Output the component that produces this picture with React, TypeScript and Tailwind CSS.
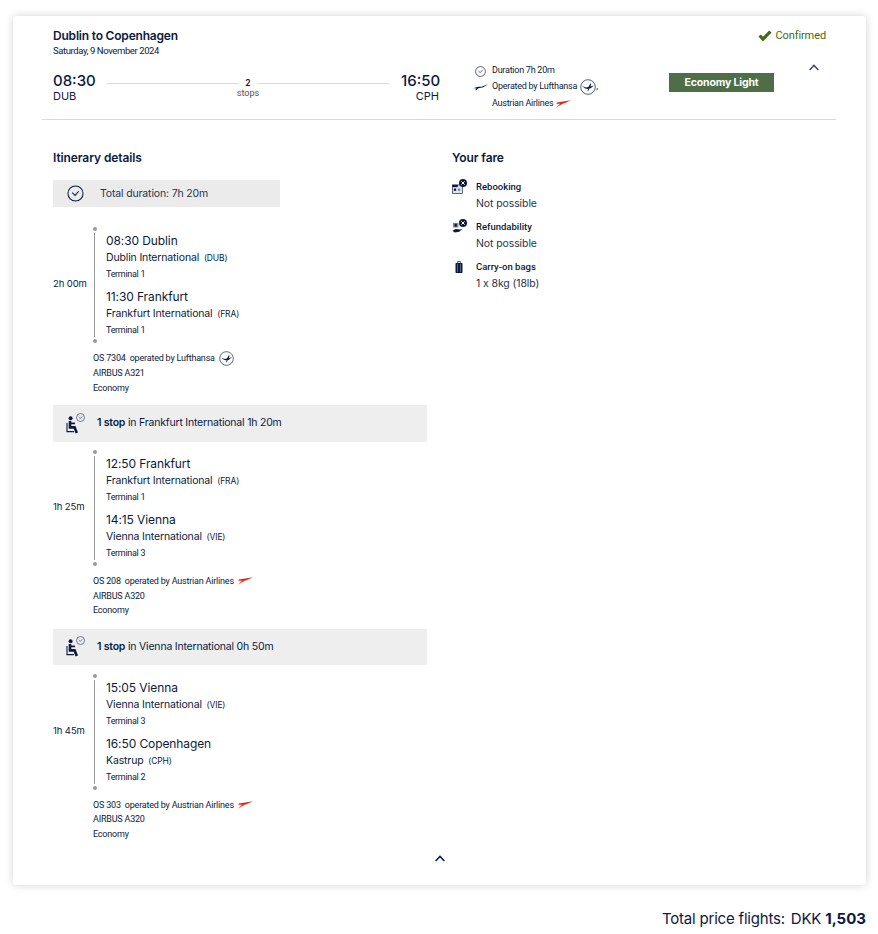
import React from "react";

const NAVY = "text-[#0c1a40]";

function Crane({ className = "" }: { className?: string }) {
  return (
    <svg viewBox="0 0 16 8" className={className}>
      <path d="M0 5.4 L5.5 3.6 L9 3.8 L16 1 L11 4.2 L7 5 L5.6 5.2 L3.6 7.4 L2.4 7.4 L3.6 5.2 Z" fill="#0c1a40" />
    </svg>
  );
}

function LhLogo({ size = "h-[15px] w-[15px]" }: { size?: string }) {
  return (
    <svg viewBox="0 0 16 16" className={`${size} shrink-0`}>
      <circle cx="8" cy="8" r="7.3" fill="white" stroke="#0c1a40" strokeWidth="0.7" />
      <path d="M1.8 6.8 L5.8 8.4 L8.4 8 L10.4 4.6 L11.2 4.6 L10.4 7.6 L14 6.4 L10.6 9.2 L8.2 10 L5.2 9.4 Z" fill="#0c1a40" />
      <path d="M8.2 10 L7.6 12 L8.4 12 L9.2 9.8 Z" fill="#0c1a40" />
    </svg>
  );
}

function OsLogo() {
  return (
    <svg viewBox="0 0 16 8" className="h-[8px] w-[15px] shrink-0">
      <path d="M0.8 2.4 L16 0 L9 3.2 L7 3.6 L0 8 L4.4 3.8 L0.4 3.8 Z" fill="#e3251b" />
    </svg>
  );
}

function Clock({ size }: { size: string }) {
  return (
    <svg viewBox="0 0 18 18" className={`${size} shrink-0`} fill="none" stroke="#0c1a40">
      <circle cx="9" cy="9" r="8" strokeWidth="1.1" />
      <path d="M5.6 8.2 L8.6 11 L12.4 6.6" strokeWidth="1.1" />
    </svg>
  );
}

function Chevron({ stroke = "#0c1a40" }: { stroke?: string }) {
  return (
    <svg viewBox="0 0 12 8" className="h-[7px] w-[12px]" fill="none" stroke={stroke} strokeWidth="1.7">
      <path d="M1 6.8 L6 1.6 L11 6.8" />
    </svg>
  );
}

function SeatIcon() {
  return (
    <div className="relative h-[20px] w-[19px] shrink-0">
      <svg viewBox="0 0 13 18" className="absolute bottom-0 left-0 h-[18px] w-[13px]" fill="none" stroke="#0c1a40">
        <circle cx="4.6" cy="2.2" r="2" fill="#0c1a40" stroke="none" />
        <path d="M4 5 V11.4 H8.6 L10.8 17" strokeWidth="2.6" />
        <path d="M5 7.4 H9" strokeWidth="1.7" />
        <path d="M1 7 V15.6 H8" strokeWidth="1.1" />
      </svg>
      <div className="absolute right-0 top-[-1px]">
        <Clock size="h-[9px] w-[9px]" />
      </div>
    </div>
  );
}

function BadgeX() {
  return (
    <svg viewBox="0 0 8 8" className="absolute -right-[1px] -top-[1px] h-[8px] w-[8px]">
      <circle cx="4" cy="4" r="4" fill="#0c1a40" />
      <path d="M2.4 2.4 L5.6 5.6 M5.6 2.4 L2.4 5.6" stroke="white" strokeWidth="1" />
    </svg>
  );
}

type Stop = { time: string; city: string; airport: string; code: string; terminal: string };
type Seg = { duration: string; from: Stop; to: Stop; flight: string; by: string; logo: React.ReactNode; plane: string };

function StopBlock({ s, gap }: { s: Stop; gap?: boolean }) {
  return (
    <div className={gap ? "mt-[7px]" : ""}>
      <div className="text-[12px] leading-[16px] tracking-[-0.1px]">{s.time} {s.city}</div>
      <div className="mt-[1px] text-[10.5px] leading-[16px] tracking-[-0.15px]">
        {s.airport} <span className="ml-[2px] text-[8.5px]">({s.code})</span>
      </div>
      <div className="mt-[1px] font-['Roboto',sans-serif] text-[9px] leading-[15px] tracking-[-0.3px]">{s.terminal}</div>
    </div>
  );
}

function Segment({ seg }: { seg: Seg }) {
  return (
    <div>
      <div className="flex h-[119px] items-center">
        <div className="w-[40px] text-[9.5px] tracking-[-0.1px]">{seg.duration}</div>
        <div className="flex h-full w-[13px] flex-col items-start pt-[2px]">
          <div className="ml-[-0.5px] h-[4px] w-[4px] rounded-full bg-[#9a9a9a]" />
          <div className="ml-[1px] my-[2px] w-[1px] flex-1 bg-[#9a9a9a]" />
          <div className="ml-[-0.5px] mb-[1px] h-[4px] w-[4px] rounded-full bg-[#9a9a9a]" />
        </div>
        <div className="h-full pt-[8px]">
          <StopBlock s={seg.from} />
          <StopBlock s={seg.to} gap />
        </div>
      </div>
      <div className="ml-[40px] mt-[7px] font-['Roboto',sans-serif] text-[9px] leading-[14.5px] tracking-[-0.2px]">
        <div className="flex items-center gap-[4px]">
          <span>{seg.flight} <span className="ml-[2px]">operated by {seg.by}</span></span>
          {seg.logo}
        </div>
        <div>{seg.plane}</div>
        <div>Economy</div>
      </div>
    </div>
  );
}

function Layover({ text, className = "", textClass = "pb-[1px]" }: { text: string; className?: string; textClass?: string }) {
  return (
    <div className={`flex w-[374px] items-center bg-[#eeeeee] pl-[13px] ${className}`}>
      <SeatIcon />
      <span className={`ml-[12px] text-[10.5px] tracking-[-0.2px] ${textClass}`}><span className="font-semibold">1 stop</span> in {text}</span>
    </div>
  );
}

const FRA1: Stop = { time: "11:30", city: "Frankfurt", airport: "Frankfurt International", code: "FRA", terminal: "Terminal 1" };
const FRA2: Stop = { ...FRA1, time: "12:50" };
const VIE1: Stop = { time: "14:15", city: "Vienna", airport: "Vienna International", code: "VIE", terminal: "Terminal 3" };
const VIE2: Stop = { ...VIE1, time: "15:05" };

const SEGMENTS: Seg[] = [
  {
    duration: "2h 00m",
    from: { time: "08:30", city: "Dublin", airport: "Dublin International", code: "DUB", terminal: "Terminal 1" },
    to: FRA1,
    flight: "OS 7304",
    by: "Lufthansa",
    logo: <LhLogo />,
    plane: "AIRBUS A321",
  },
  {
    duration: "1h 25m",
    from: FRA2,
    to: VIE1,
    flight: "OS 208",
    by: "Austrian Airlines",
    logo: <OsLogo />,
    plane: "AIRBUS A320",
  },
  {
    duration: "1h 45m",
    from: VIE2,
    to: { time: "16:50", city: "Copenhagen", airport: "Kastrup", code: "CPH", terminal: "Terminal 2" },
    flight: "OS 303",
    by: "Austrian Airlines",
    logo: <OsLogo />,
    plane: "AIRBUS A320",
  },
];

const FARE = [
  { title: "Rebooking", value: "Not possible", kind: "rebook" },
  { title: "Refundability", value: "Not possible", kind: "refund" },
  { title: "Carry-on bags", value: "1 x 8kg (18lb)", kind: "bag" },
];

function FareIcon({ kind }: { kind: string }) {
  if (kind === "bag") {
    return (
      <div className="flex h-[14px] w-[14px] items-center justify-center">
        <svg viewBox="0 0 8 12" className="h-[12px] w-[8px]">
          <rect x="2.8" y="0.3" width="2.4" height="2" fill="none" stroke="#0c1a40" strokeWidth="0.7" />
          <rect x="0.5" y="2" width="7" height="10" rx="0.8" fill="#0c1a40" />
          <path d="M2.5 3 V11 M5.5 3 V11" stroke="#8d93a6" strokeWidth="0.6" />
        </svg>
      </div>
    );
  }
  return (
    <div className="relative h-[14px] w-[14px]">
      {kind === "rebook" ? (
        <svg viewBox="0 0 12 11" className="absolute bottom-0 left-0 h-[10px] w-[11px]">
          <rect x="0.4" y="1" width="11" height="9.6" fill="#dfe3ea" stroke="#0c1a40" strokeWidth="0.7" />
          <rect x="0.4" y="1" width="6" height="2.4" fill="#0c1a40" />
          <rect x="2" y="5" width="2.5" height="2.5" fill="#0c1a40" />
          <rect x="6.5" y="5" width="2.5" height="2.5" fill="#7d8498" />
        </svg>
      ) : (
        <svg viewBox="0 0 12 13" className="absolute bottom-0 left-0 h-[13px] w-[11px]">
          <rect x="1" y="1.5" width="6" height="5" fill="#7d8498" />
          <rect x="2.8" y="2.5" width="2.4" height="3" fill="#0c1a40" />
          <path d="M0.5 10 L4 8.2 L9 8.6 L11.5 7.6 L8 11 L3 12 Z" fill="#0c1a40" />
        </svg>
      )}
      <BadgeX />
    </div>
  );
}

export default function App() {
  return (
    <div className={`h-[934px] w-[878px] overflow-hidden bg-white pt-[16px] font-['Inter',sans-serif] ${NAVY}`}>
      <div className="ml-[13px] h-[869px] w-[853px] rounded-[3px] bg-white shadow-[0_0_8px_rgba(0,0,0,0.18)]">
        {/* summary */}
        <div className="ml-[29px] mr-[30px] h-[104px] border-b border-[#d9d9d9] pl-[11px] pr-[9px] pt-[12px]">
          <div className="flex items-start justify-between">
            <div>
              <div className="text-[12px] font-semibold leading-[15px] tracking-[-0.2px]">Dublin to Copenhagen</div>
              <div className="mt-[1px] font-['Roboto',sans-serif] text-[9.5px] leading-[13px] tracking-[-0.4px]">Saturday, 9 November 2024</div>
            </div>
            <div className="mr-[1px] flex items-center gap-[3px] text-[#3f6b12]">
              <svg viewBox="0 0 14 12" className="h-[12px] w-[14px]">
                <path d="M0.4 6.6 L2.8 4.4 L5 6.8 L11.2 0.4 L13.6 2.4 L5 11.4 Z" fill="#3f6b12" />
              </svg>
              <span className="font-['Roboto',sans-serif] text-[11px] leading-[15px] tracking-[-0.1px]">Confirmed</span>
            </div>
          </div>
          <div className="mt-[15px] flex items-start">
            <div className="w-[54px]">
              <div className="text-[15px] font-medium leading-[18px]">08:30</div>
              <div className="text-[11px] leading-[12px]">DUB</div>
            </div>
            <div className="mt-[6px] flex w-[282px] flex-col items-center">
              <div className="flex w-full items-center gap-[6px]">
                <div className="h-[1px] flex-1 bg-[#d9d9d9]" />
                <span className="text-[8.5px] font-semibold leading-[10px]">2</span>
                <div className="h-[1px] flex-1 bg-[#d9d9d9]" />
              </div>
              <div className="font-['Roboto',sans-serif] text-[9px] leading-[10px] text-[#4a5068]">stops</div>
            </div>
            <div className="ml-[12px] w-[38px] text-right">
              <div className="text-[15px] font-medium leading-[18px]">16:50</div>
              <div className="text-[11px] leading-[12px]">CPH</div>
            </div>
            <div className="ml-[35px] mt-[-8px] w-[195px] font-['Roboto',sans-serif] text-[9px] tracking-[-0.25px]">
              <div className="flex h-[14px] items-center">
                <div className="flex w-[18px] pl-[1px]"><Clock size="h-[11px] w-[11px]" /></div>
                Duration 7h 20m
              </div>
              <div className="flex h-[17px] items-center">
                <div className="ml-[-1px] w-[19px] pr-[3px]"><Crane className="h-[8px] w-[15px]" /></div>
                Operated by Lufthansa
                <span className="ml-[3px]"><LhLogo size="h-[16px] w-[16px]" /></span>,
              </div>
              <div className="flex h-[17px] items-center gap-[3px] pl-[18px]">
                Austrian Airlines <OsLogo />
              </div>
            </div>
            <div className="mt-[1px] flex h-[19px] w-[105px] items-center justify-center bg-[#4e6e48] text-[10.5px] font-bold tracking-[-0.15px] text-white">
              Economy Light
            </div>
            <div className="ml-[34px] mt-[-8px]"><Chevron stroke="#3d4a70" /></div>
          </div>
        </div>

        {/* details */}
        <div className="flex pl-[40px] pt-[30px]">
          <div className="w-[399px]">
            <div className="text-[12px] font-semibold leading-[15px] tracking-[-0.1px]">Itinerary details</div>
            <div className="mt-[15px] flex h-[27px] w-[227px] items-center bg-[#ebebeb] pl-[14px] text-[10.5px] tracking-[-0.15px]">
              <Clock size="h-[17px] w-[17px]" />
              <span className="ml-[16px] text-[#2a3450]">Total duration: 7h 20m</span>
            </div>
            <div className="mt-[18px]">
              <Segment seg={SEGMENTS[0]} />
              <Layover text="Frankfurt International 1h 20m" className="mb-[6px] mt-[10px] h-[37px]" />
              <Segment seg={SEGMENTS[1]} />
              <Layover text="Vienna International 0h 50m" className="mb-[7px] mt-[11px] h-[36px]" textClass="pt-[1px]" />
              <Segment seg={SEGMENTS[2]} />
            </div>
          </div>
          <div>
            <div className="text-[12px] font-semibold leading-[15px] tracking-[-0.1px]">Your fare</div>
            <div className="mt-[15px] flex flex-col gap-[8px]">
              {FARE.map((f) => (
                <div key={f.title} className="flex">
                  <div className="w-[24px]"><FareIcon kind={f.kind} /></div>
                  <div>
                    <div className="font-['Roboto',sans-serif] text-[9.5px] font-medium leading-[14px]">{f.title}</div>
                    <div className="mt-[2px] text-[10.5px] leading-[16px] tracking-[-0.1px] text-[#2a3450] [font-feature-settings:'calt'_0]">{f.value}</div>
                  </div>
                </div>
              ))}
            </div>
          </div>
        </div>
        <div className="mt-[14px] flex justify-center"><Chevron /></div>
      </div>

      <div className="mt-[25px] flex w-[866px] justify-end text-[15px] leading-[18px]">
        <span className="tracking-[-0.2px]">Total price flights:</span>
        <span className="ml-[6px] tracking-[-0.2px]">DKK</span>
        <span className="ml-[4px] font-bold">1,503</span>
      </div>
    </div>
  );
}
